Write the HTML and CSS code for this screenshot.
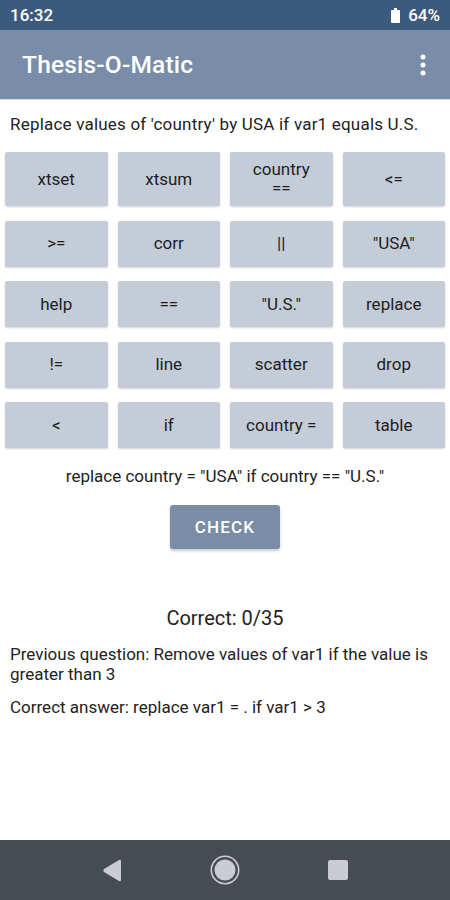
FILE: index.html
```html
<!DOCTYPE html>
<html lang="en">

<head>
    <title>Thesis-O-Matic</title>
    <link rel="stylesheet" href="styles.css">
</head>

<body>
    <div class="phone">
        <div class="status-bar">
            <span class="time">16:32</span>
            <div class="battery-wrap">
                <svg class="battery" width="9" height="15" viewBox="0 0 9 15">
                    <rect x="3" y="0" width="3" height="2" fill="#fff" />
                    <rect x="0" y="2" width="9" height="13" rx="1" fill="#fff" />
                </svg>
                <span>64%</span>
            </div>
        </div>

        <div class="app-bar">
            <h1>Thesis-O-Matic</h1>
            <svg class="menu" width="6" height="22" viewBox="0 0 6 22">
                <circle cx="3" cy="3" r="2.5" fill="#fff" />
                <circle cx="3" cy="11" r="2.5" fill="#fff" />
                <circle cx="3" cy="19" r="2.5" fill="#fff" />
            </svg>
        </div>

        <div class="content">
            <p class="question">Replace values of 'country' by USA if var1 equals U.S.</p>

            <div class="keys">
                <button class="key">xtset</button>
                <button class="key">xtsum</button>
                <button class="key">country<br>==</button>
                <button class="key">&lt;=</button>

                <button class="key">&gt;=</button>
                <button class="key">corr</button>
                <button class="key">||</button>
                <button class="key">"USA"</button>

                <button class="key">help</button>
                <button class="key">==</button>
                <button class="key">"U.S."</button>
                <button class="key">replace</button>

                <button class="key">!=</button>
                <button class="key">line</button>
                <button class="key">scatter</button>
                <button class="key">drop</button>

                <button class="key">&lt;</button>
                <button class="key">if</button>
                <button class="key">country =</button>
                <button class="key">table</button>
            </div>

            <p class="answer">replace country = "USA" if country == "U.S."</p>

            <button class="check">CHECK</button>

            <p class="score">Correct: 0/35</p>

            <p class="info">Previous question: Remove values of var1 if the value is greater than 3</p>
            <p class="info">Correct answer: replace var1 = . if var1 &gt; 3</p>
        </div>

        <div class="nav-bar">
            <svg width="20" height="23" viewBox="0 0 20 23">
                <path d="M19 2 L19 21 Q19 23 17 22 L2 13 Q0.5 11.5 2 10 L17 1 Q19 0 19 2 Z" fill="#c9ccd0" />
            </svg>
            <svg width="30" height="30" viewBox="0 0 30 30">
                <circle cx="15" cy="15" r="13.7" fill="none" stroke="#c9ccd0" stroke-width="1.6" />
                <circle cx="15" cy="15" r="10.5" fill="#c9ccd0" />
            </svg>
            <svg width="20" height="20" viewBox="0 0 20 20">
                <rect x="0" y="0" width="20" height="20" rx="2" fill="#c9ccd0" />
            </svg>
        </div>
    </div>
</body>

</html>
```

FILE: styles.css
```css
body {
    font-family: Roboto, "Noto Sans", sans-serif;
    margin: 0;
    padding: 0;
    background-color: #fff;
}

.phone {
    width: 450px;
    height: 900px;
    display: flex;
    flex-direction: column;
}

.status-bar {
    height: 30px;
    background-color: #3b5a7d;
    color: #fff;
    display: flex;
    justify-content: space-between;
    align-items: center;
    padding: 0 10px 0 10px;
    font-size: 17px;
    font-weight: 500;
}

.battery-wrap {
    display: flex;
    align-items: center;
    gap: 8px;
}

.battery {
    display: block;
}

.app-bar {
    height: 70px;
    background-color: #7a8da8;
    display: flex;
    justify-content: space-between;
    align-items: center;
    padding: 0 24px 0 22px;
    border-bottom: 1px solid #d6dbe2;
    box-sizing: border-box;
}

.app-bar h1 {
    margin: 0;
    color: #fff;
    font-size: 24.5px;
    font-weight: 500;
    letter-spacing: 0.2px;
}

.content {
    flex: 1;
    padding: 0 5px;
}

.question {
    margin: 14px 5px 18px;
    font-size: 17px;
    line-height: 20px;
    letter-spacing: 0.2px;
    color: #222;
}

.keys {
    display: grid;
    grid-template-columns: repeat(4, 1fr);
    column-gap: 10px;
    row-gap: 14.5px;
}

.key {
    min-height: 46px;
    padding: 8px 4px;
    background-color: #c4ccd7;
    border: none;
    border-radius: 2px;
    box-shadow: 0 1px 2px rgba(0, 0, 0, 0.18);
    font-family: Roboto, "Noto Sans", sans-serif;
    font-size: 17px;
    font-weight: 400;
    line-height: 19px;
    color: #1e1e1e;
}

.answer {
    margin: 18px 0 0;
    text-align: center;
    font-size: 17px;
    line-height: 20px;
    color: #222;
}

.check {
    display: block;
    margin: 19px auto 0;
    width: 110px;
    height: 44px;
    background-color: #7a8ca6;
    border: none;
    border-radius: 3px;
    box-shadow: 0 2px 3px rgba(0, 0, 0, 0.2);
    color: #fff;
    font-family: Roboto, "Noto Sans", sans-serif;
    font-size: 17px;
    font-weight: 500;
    letter-spacing: 1.2px;
}

.score {
    margin: 57px 0 0;
    text-align: center;
    font-size: 20px;
    line-height: 24px;
    color: #222;
}

.info {
    margin: 14px 5px 0;
    font-size: 17px;
    line-height: 20px;
    color: #222;
}

.info + .info {
    margin-top: 13px;
}

.nav-bar {
    height: 60px;
    background-color: #474c52;
    display: flex;
    justify-content: center;
    align-items: center;
    gap: 88px;
}
```
